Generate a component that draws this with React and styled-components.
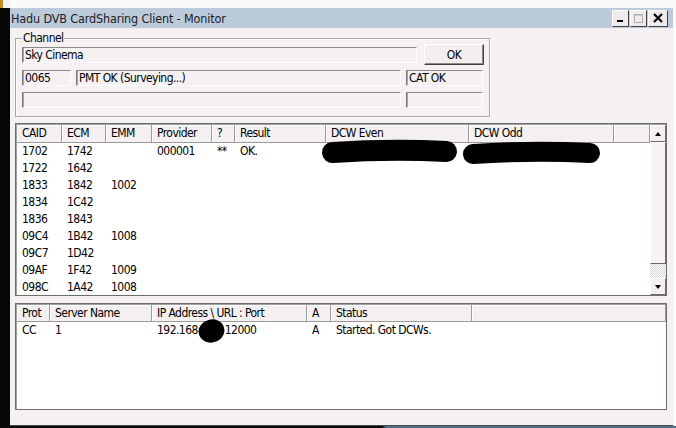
import React from 'react'
import styled, { createGlobalStyle } from 'styled-components'

const GlobalStyle = createGlobalStyle`
  html, body {
    margin: 0;
    padding: 0;
    width: 676px;
    height: 428px;
    overflow: hidden;
    background: #fafafa;
  }
  body {
    font-family: "DejaVu Sans Condensed", "Liberation Sans", Arial, sans-serif;
    color: #000;
  }
  * { box-sizing: border-box; }
`

const Screen = styled.div`
  width: 676px;
  height: 428px;
  display: flex;
  flex-direction: column;
`

const Desk = styled.div`
  height: 426px;
  display: flex;
`

const LeftEdge = styled.div`
  width: 10px;
  background:
    linear-gradient(to right, #c8892a 0 3px, #f2f2f2 3px) top / 100% 8px no-repeat,
    #060606;
`

const Main = styled.div`
  flex: 1;
  padding-top: 8px;
  display: flex;
  flex-direction: column;
`

const Window = styled.div`
  width: 663px;
  height: 418px;
  background: #f5f1f3;
  border-bottom: 1px solid #4a4a4a;
  display: flex;
  flex-direction: column;
`

const TitleBar = styled.div`
  height: 20px;
  background: #bccbdb;
  display: flex;
  align-items: center;
  padding: 0 5px 0 1px;
`

const TitleText = styled.div`
  flex: 1;
  font-size: 12.5px;
  letter-spacing: -0.15px;
  color: #1c1c1c;
  white-space: nowrap;
`

const CaptionButtons = styled.div`
  display: flex;
  gap: 1px;
`

const CaptionButton = styled.div`
  width: ${p => p.$w}px;
  height: 17px;
  background: #efebed;
  border: 1px solid;
  border-color: #ffffff #404040 #404040 #ffffff;
  display: flex;
  align-items: center;
  justify-content: center;
`

const Body = styled.div`
  flex: 1;
  padding: 10px 6px 0 5px;
  display: flex;
  flex-direction: column;
  font-size: 12px;
  letter-spacing: -0.55px;
`

const GroupBox = styled.div`
  position: relative;
  width: 475px;
  border: 1px solid #a9a5a7;
  box-shadow: 1px 1px 0 #ffffff, inset 1px 1px 0 #ffffff;
  padding: 5px 5px 8px 6px;
`

const Legend = styled.span`
  position: absolute;
  top: -8px;
  left: 6px;
  padding: 0 1px;
  background: #f5f1f3;
  line-height: 14px;
`

const FieldRow = styled.div`
  display: flex;
  align-items: center;
  gap: ${p => p.$gap || 5}px;
  height: ${p => p.$h || 16}px;
  margin-top: ${p => p.$mt || 0}px;
`

const Field = styled.div`
  width: ${p => p.$w}px;
  height: 16px;
  border: 1px solid;
  border-color: #8a8a8a #ffffff #ffffff #7a7a7a;
  box-shadow: inset 1px 0 0 #a8a4a6;
  padding-left: 2px;
  line-height: 14px;
  white-space: nowrap;
  overflow: hidden;
`

const Button = styled.button`
  width: 60px;
  height: 21px;
  padding: 0;
  background: #f3eff1;
  border: 1px solid;
  border-color: #ffffff #404040 #404040 #ffffff;
  box-shadow: inset -1px -1px 0 #8a8a8a;
  font-family: inherit;
  font-size: 12px;
  letter-spacing: -0.55px;
  color: #000;
`

const ListView = styled.div`
  margin-top: ${p => p.$mt}px;
  width: 652px;
  height: ${p => p.$h}px;
  background: #ffffff;
  border: 1px solid #6e6e6e;
  box-shadow: inset 1px 1px 0 #a0a0a0;
  display: flex;
`

const Table = styled.div`
  flex: 1;
  display: flex;
  flex-direction: column;
  padding-left: 1px;
  padding-top: 1px;
`

const HeaderRow = styled.div`
  display: grid;
  grid-template-columns: ${p => p.$cols};
  height: ${p => p.$h}px;
`

const HeaderCell = styled.div`
  background: #f4f0f2;
  border-right: 1px solid #9b9b9b;
  border-bottom: 1px solid #9b9b9b;
  box-shadow: inset 1px 1px 0 #ffffff;
  padding-left: 5px;
  line-height: 17px;
  white-space: nowrap;
  overflow: hidden;
`

const DataRow = styled.div`
  display: grid;
  grid-template-columns: ${p => p.$cols};
  height: 17px;
`

const Cell = styled.div`
  position: relative;
  padding-left: 5px;
  line-height: 17px;
  white-space: nowrap;
`

const Blot = styled.svg`
  position: absolute;
  left: ${p => p.$x}px;
  top: ${p => p.$y}px;
  overflow: visible;
`

const Hidden = styled.span`
  position: relative;
  display: inline-block;
  width: 27px;
  height: 17px;
  vertical-align: top;
`

const ScrollBar = styled.div`
  width: 16px;
  display: flex;
  flex-direction: column;
  margin-top: 1px;
`

const ScrollButton = styled.div`
  height: 17px;
  background: #f4f0f2;
  border: 1px solid;
  border-color: #ffffff #6a6a6a #6a6a6a #ffffff;
  display: flex;
  align-items: center;
  justify-content: center;
`

const Thumb = styled.div`
  height: 122px;
  background: #f7f3f5;
  border: 1px solid;
  border-color: #ffffff #6a6a6a #6a6a6a #ffffff;
`

const Track = styled.div`
  flex: 1;
  background: repeating-conic-gradient(#ffffff 0 25%, #d8d4d6 0 50%) 0 0 / 2px 2px;
`

const Arrow = styled.span`
  width: 0;
  height: 0;
  border-left: 3.5px solid transparent;
  border-right: 3.5px solid transparent;
  ${p => (p.$down ? 'border-top: 4px solid #000;' : 'border-bottom: 4px solid #000;')}
`

const Taskbar = styled.div`
  height: 2px;
  background: linear-gradient(to right, #0a0a0a 0 382px, #4f6d8d 386px);
`

const ecmCols = '45px 44px 46px 60px 23px 91px 143px 145px 1fr'
const ecmHead = ['CAID', 'ECM', 'EMM', 'Provider', '?', 'Result', 'DCW Even', 'DCW Odd', '']
const ecmRows = [
  ['1702', '1742', '', '000001', '**', 'OK.'],
  ['1722', '1642', ''],
  ['1833', '1842', '1002'],
  ['1834', '1C42', ''],
  ['1836', '1843', ''],
  ['09C4', '1B42', '1008'],
  ['09C7', '1D42', ''],
  ['09AF', '1F42', '1009'],
  ['098C', '1A42', '1008'],
]

const srvCols = '33px 102px 155px 24px 141px 1fr'
const srvHead = ['Prot', 'Server Name', 'IP Address \\ URL : Port', 'A', 'Status', '']

const Marker = ({ x, y, w, h }) => (
  <Blot $x={x} $y={y} width={w} height={h} viewBox={`0 0 ${w} ${h}`}>
    <path
      d={`M${h / 2 - 2} ${h / 2 + 1} Q ${w / 2} ${h / 2 - 3} ${w - h / 2} ${h / 2}`}
      stroke="#000"
      strokeWidth={h - 2}
      strokeLinecap="round"
      fill="none"
    />
  </Blot>
)

export default function App() {
  return (
    <Screen>
      <GlobalStyle />
      <Desk>
        <LeftEdge />
        <Main>
          <Window>
            <TitleBar>
              <TitleText>Hadu DVB CardSharing Client - Monitor</TitleText>
              <CaptionButtons>
                <CaptionButton $w={17}>
                  <svg width="9" height="9" viewBox="0 0 9 9">
                    <rect x="1" y="6" width="6" height="2" fill="#000" />
                  </svg>
                </CaptionButton>
                <CaptionButton $w={17}>
                  <svg width="11" height="11" viewBox="0 0 11 11">
                    <rect x="1.5" y="1.5" width="8" height="8" fill="none" stroke="#b0acae" />
                    <rect x="1.5" y="1.5" width="8" height="1" fill="#b0acae" />
                  </svg>
                </CaptionButton>
                <CaptionButton $w={20}>
                  <svg width="10" height="10" viewBox="0 0 10 10">
                    <path d="M1 1 L9 9 M9 1 L1 9" stroke="#000" strokeWidth="2.2" />
                  </svg>
                </CaptionButton>
              </CaptionButtons>
            </TitleBar>
            <Body>
              <GroupBox>
                <Legend>Channel</Legend>
                <FieldRow $h={21} $gap={7}>
                  <Field $w={395}>Sky Cinema</Field>
                  <Button>OK</Button>
                </FieldRow>
                <FieldRow $mt={5}>
                  <Field $w={49}>0065</Field>
                  <Field $w={325}>PMT OK (Surveying...)</Field>
                  <Field $w={77}>CAT OK</Field>
                </FieldRow>
                <FieldRow $mt={6}>
                  <Field $w={379} />
                  <Field $w={77} />
                </FieldRow>
              </GroupBox>

              <ListView $mt={6} $h={173}>
                <Table>
                  <HeaderRow $cols={ecmCols} $h={18}>
                    {ecmHead.map((h, i) => (
                      <HeaderCell key={i}>{h}</HeaderCell>
                    ))}
                  </HeaderRow>
                  {ecmRows.map((r, ri) => (
                    <DataRow key={ri} $cols={ecmCols}>
                      {ecmHead.map((_, ci) => (
                        <Cell key={ci}>
                          {r[ci] || ''}
                          {ri === 0 && ci === 6 && <Marker x={-3} y={-3} w={135} h={23} />}
                          {ri === 0 && ci === 7 && <Marker x={-5} y={-1} w={137} h={22} />}
                        </Cell>
                      ))}
                    </DataRow>
                  ))}
                </Table>
                <ScrollBar>
                  <ScrollButton><Arrow /></ScrollButton>
                  <Thumb />
                  <Track />
                  <ScrollButton><Arrow $down /></ScrollButton>
                </ScrollBar>
              </ListView>

              <ListView $mt={7} $h={107}>
                <Table>
                  <HeaderRow $cols={srvCols} $h={17}>
                    {srvHead.map((h, i) => (
                      <HeaderCell key={i}>{h}</HeaderCell>
                    ))}
                  </HeaderRow>
                  <DataRow $cols={srvCols}>
                    <Cell>CC</Cell>
                    <Cell>1</Cell>
                    <Cell>
                      192.168
                      <Hidden>
                        <Blot $x={0} $y={-3} width="27" height="24" viewBox="0 0 27 24">
                          <ellipse cx="13.5" cy="12" rx="13" ry="11.5" fill="#000" transform="rotate(-15 13.5 12)" />
                        </Blot>
                      </Hidden>
                      12000
                    </Cell>
                    <Cell>A</Cell>
                    <Cell>Started. Got DCWs.</Cell>
                    <Cell />
                  </DataRow>
                </Table>
              </ListView>
            </Body>
          </Window>
        </Main>
      </Desk>
      <Taskbar />
    </Screen>
  )
}
